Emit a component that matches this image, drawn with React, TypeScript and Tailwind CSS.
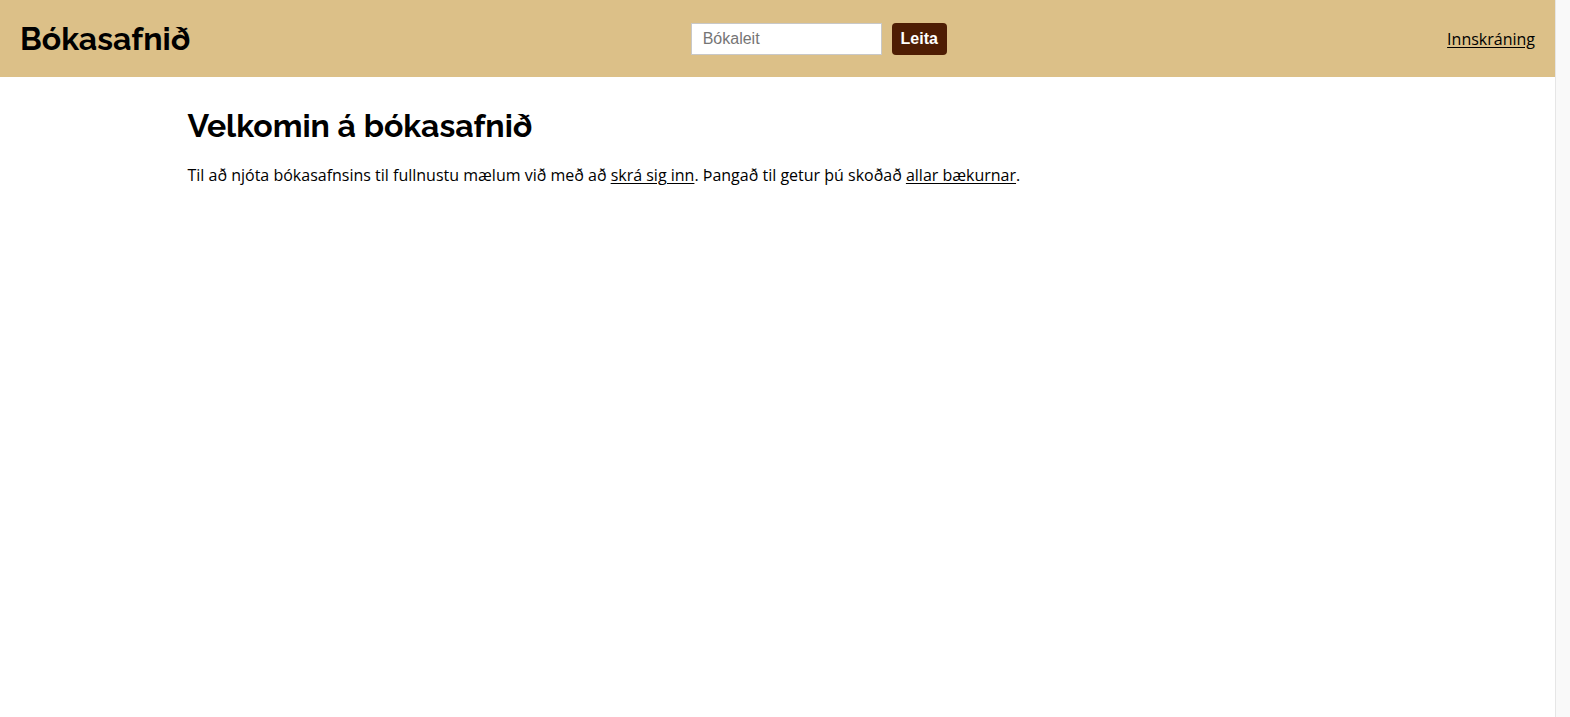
import React from "react";

export default function App() {
  return (
    <div className="flex w-full h-[717px] bg-white overflow-hidden">
      <div className="flex-1 min-w-0 flex flex-col">
        <header className="h-[77px] bg-[#dcc088] flex items-center justify-between px-5">
          <div className="text-[32px] font-bold text-black" style={{ fontFamily: 'Raleway, Lato, "Open Sans", sans-serif' }}>
            Bókasafnið
          </div>
          <form className="flex items-center gap-[10px]" onSubmit={(e) => e.preventDefault()}>
            <input
              type="text"
              placeholder="Bókaleit"
              className="w-[191px] h-[32px] bg-white border border-[#c8c8c8] px-[11px] text-[16px] text-black placeholder:text-[#757575] outline-none"
              style={{ fontFamily: '"Liberation Sans", Arial, sans-serif' }}
            />
            <button
              type="submit"
              className="w-[55px] h-[32px] rounded-[4px] bg-[#4e1d04] text-white text-[16px] font-bold"
              style={{ fontFamily: '"Liberation Sans", Arial, sans-serif' }}
            >
              Leita
            </button>
          </form>
          <a href="#" className="text-[16px] text-black underline underline-offset-2 mt-[1px]" style={{ fontFamily: '"Open Sans", sans-serif' }}>
            Innskráning
          </a>
        </header>
        <main className="w-full max-w-[1180px] mx-auto pt-[29px]">
          <h1 className="text-[32px] font-bold text-black leading-[40px]" style={{ fontFamily: 'Raleway, Lato, "Open Sans", sans-serif' }}>
            Velkomin á bókasafnið
          </h1>
          <p className="mt-[17px] text-[16px] text-black leading-[24px]" style={{ fontFamily: '"Open Sans", sans-serif' }}>
            Til að njóta bókasafnsins til fullnustu mælum við með að{" "}
            <a href="#" className="underline underline-offset-2">skrá sig inn</a>. Þangað til getur þú skoðað{" "}
            <a href="#" className="underline underline-offset-2">allar bækurnar</a>.
          </p>
        </main>
      </div>
      <div className="w-[15px] shrink-0 bg-[#f9f9f9] border-l border-[#e6e6e6]" />
    </div>
  );
}
